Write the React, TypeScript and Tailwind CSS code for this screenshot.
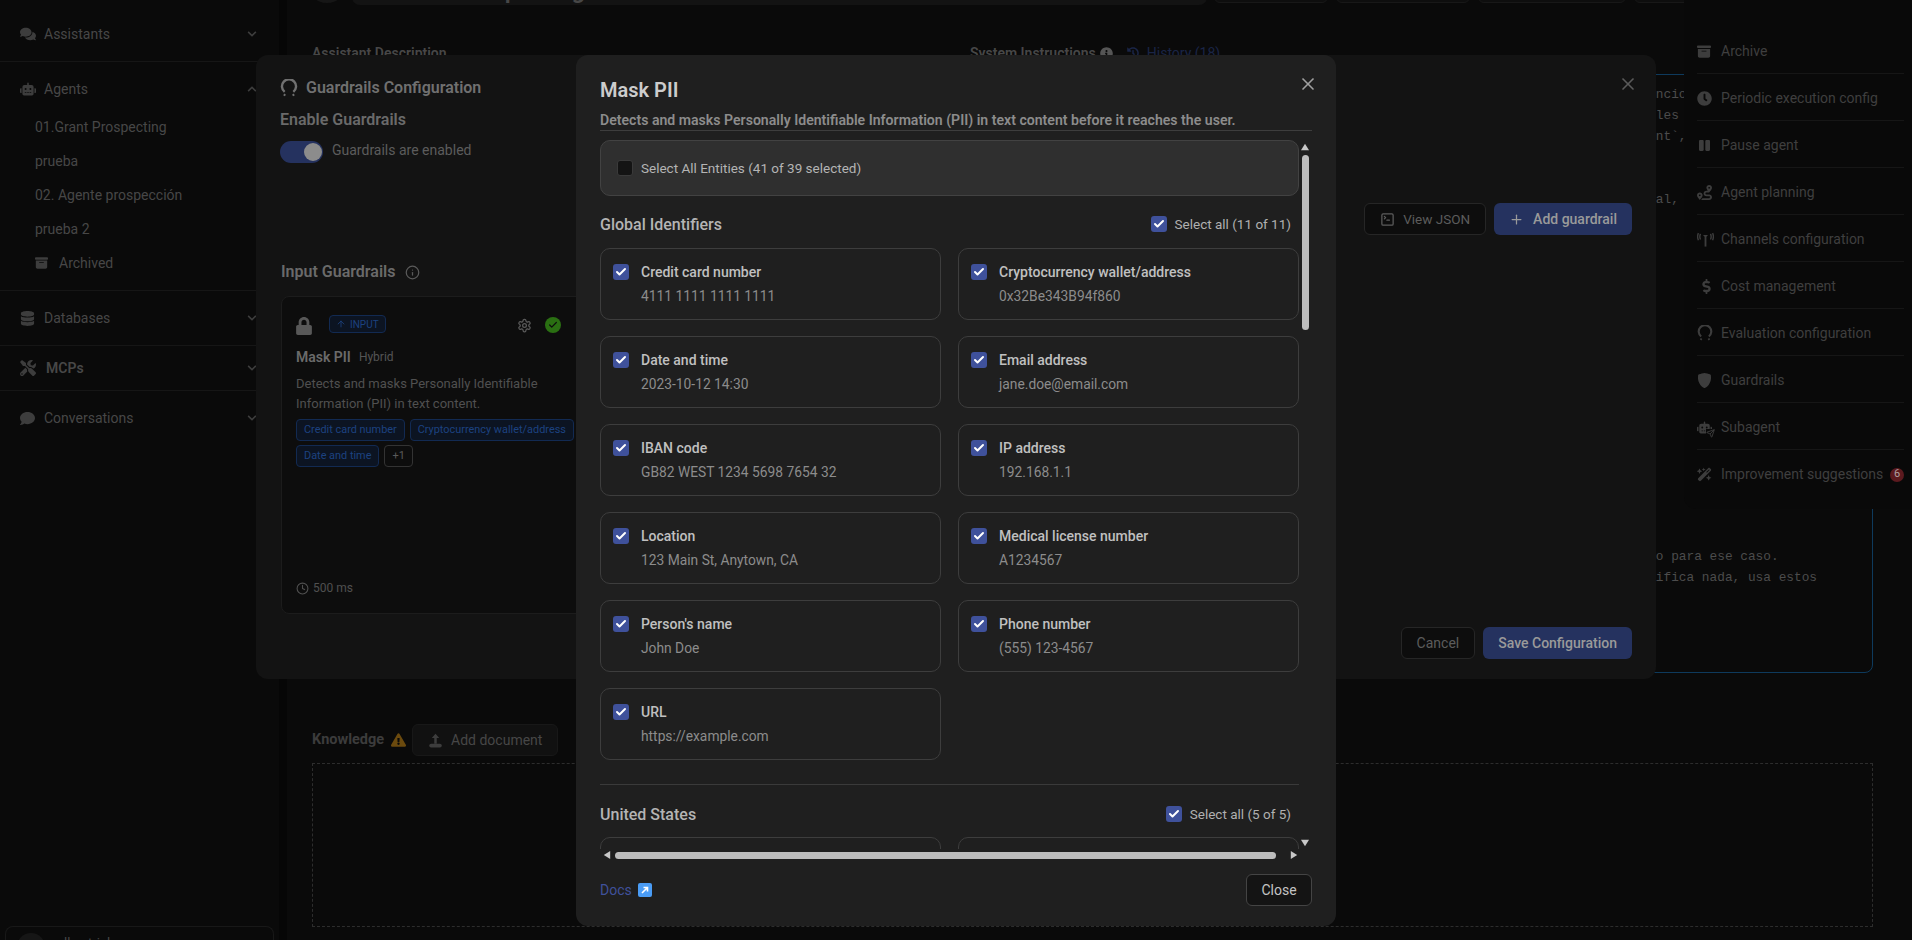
import { ReactNode } from "react";
import {
  FaChevronDown,
  FaChevronUp,
  FaClock,
  FaComment,
  FaComments,
  FaDatabase,
  FaDollarSign,
  FaExclamationTriangle,
  FaHistory,
  FaInfoCircle,
  FaLock,
  FaPause,
  FaRobot,
  FaRoute,
  FaTools,
} from "react-icons/fa";
import { BsShieldFill } from "react-icons/bs";
import { FaBoxArchive, FaWandMagicSparkles } from "react-icons/fa6";
import { LuCheck, LuClock, LuInfo, LuPlus, LuSend, LuSettings, LuSquareTerminal, LuX, LuArrowUp } from "react-icons/lu";

// horseshoe-looking icon used for evaluation + guardrails config
function ArcIcon({ className }: { className?: string }) {
  return (
    <svg viewBox="0 0 24 24" fill="none" stroke="currentColor" className={className}>
      <path d="M6.2 17.2A9.4 9.4 0 1 1 17.8 17.2" strokeWidth={3.2} />
      <path d="M5 20.5l2.2 1.6M19 20.5l-2.2 1.6" strokeWidth={2.6} />
    </svg>
  );
}

function AntennaIcon({ className }: { className?: string }) {
  return (
    <svg viewBox="0 0 24 24" fill="none" stroke="currentColor" strokeWidth={2} className={className}>
      <path d="M12 8v14" strokeWidth={2.6} />
      <path d="M8.5 5.5h7l-3.5 4z" fill="currentColor" stroke="none" />
      <path d="M5 4c-1 2-1 6 0 8M2 3c-1.4 3-1.4 7 0 10M19 4c1 2 1 6 0 8M22 3c1.4 3 1.4 7 0 10" />
    </svg>
  );
}

function UploadIcon({ className }: { className?: string }) {
  return (
    <svg viewBox="0 0 24 24" fill="currentColor" className={className}>
      <path d="M12 1l6 7h-4v9h-4V8H6z" />
      <rect x="2" y="17" width="20" height="6" rx="3" />
    </svg>
  );
}

function Tri({ d, className }: { d: string; className: string }) {
  return (
    <svg viewBox="0 0 10 10" fill="#c8c8c8" className={className}>
      <polygon points={d} />
    </svg>
  );
}

interface SideSectionProps {
  icon: ReactNode;
  label: string;
  open?: boolean;
  className: string;
  labelClass?: string;
  children?: ReactNode;
}

function SideSection({ icon, label, open, className, labelClass, children }: SideSectionProps) {
  return (
    <div className={`border-b border-[#161616] ${className}`}>
      <div className="flex h-6 items-center pl-[20px] pr-[22px]">
        <span className="flex w-[24px] text-[#3d3d3d]">{icon}</span>
        <span className={`flex-1 text-[14px] text-[#474747] ${labelClass ?? ""}`}>{label}</span>
        {open ? (
          <FaChevronUp className="h-[10px] w-[10px] text-[#3d3d3d]" />
        ) : (
          <FaChevronDown className="h-[10px] w-[10px] text-[#3d3d3d]" />
        )}
      </div>
      {children}
    </div>
  );
}

function Sidebar() {
  const agents = ["01.Grant Prospecting", "prueba", "02. Agente prospección", "prueba 2"];
  return (
    <div className="flex h-full w-[279px] shrink-0 flex-col">
      <SideSection icon={<FaComments size={16} />} label="Assistants" className="pb-[15px] pt-[22px]" />
      <SideSection icon={<FaRobot size={16} />} label="Agents" open className="pb-[10px] pt-[15px]">
        <div className="mt-[9px]">
          {agents.map((a) => (
            <div key={a} className="flex h-[34px] items-center pl-[35px] text-[14px] text-[#474747]">
              {a}
            </div>
          ))}
          <div className="flex h-[34px] items-center pl-[35px] text-[14px] text-[#474747]">
            <FaBoxArchive className="mr-[11px] h-[14px] w-[13px] text-[#3d3d3d]" />
            Archived
          </div>
        </div>
      </SideSection>
      <SideSection icon={<FaDatabase size={15} />} label="Databases" className="pb-[15px] pt-[15px]" />
      <SideSection
        icon={<FaTools size={16} />}
        label="MCPs"
        labelClass="font-semibold ml-[2px]"
        className="pb-[10px] pt-[10px]"
      />
      <SideSection icon={<FaComment size={15} />} label="Conversations" className="border-b-0 pt-[15px]" />
      <div className="mx-[5px] mt-auto flex h-[14px] gap-3 overflow-hidden rounded-t-lg border border-b-0 border-[#181818] pl-[11px] pt-[6px]">
        <div className="h-[28px] w-[28px] shrink-0 rounded-full bg-[#161616]" />
        <span className="text-[13px] leading-5 text-[#474747]">allan.trials</span>
      </div>
    </div>
  );
}

function line(hidden: string, visible: string) {
  return hidden.padEnd(88) + visible;
}

const promptLines = [
  line("Eres un agente de prospección de subvenciones y ayudas públicas para organiza", "ncio"),
  line("Tu objetivo es encontrar oportunidades de financiación que sean", "les"),
  line("Usa siempre la herramienta `search_grant", "nt`,"),
  "",
  "",
  line("Busca primero en el ámbito nacion", "al,"),
];
const promptEnd = [
  line("Si el usuario indica un país, busca únicamente en el listad", "o para ese caso."),
  line("Si no especif", "ifica nada, usa estos"),
];

function MainColumn() {
  const topButtons = ["w-[114px]", "w-[134px]", "w-[148px]", "w-[107px]", "w-[86px]", "w-[30px]"];
  return (
    <div className="-mt-[35px] flex h-[975px] flex-1 flex-col pl-[25px] pr-[39px]">
      <div className="flex h-10 items-start">
        <div className="-ml-[5px] mr-[5px] mt-[-2px] h-10 w-10 shrink-0 rounded-full bg-[#161616]" />
        <div className="flex h-10 w-[855px] shrink-0 items-end rounded-lg bg-[#131313] px-[4px] text-[24px] font-semibold leading-[30px] text-[#474747]">
          01.Grant Prospecting
        </div>
        <div className="ml-[7px] flex shrink-0 gap-2">
          {topButtons.map((w) => (
            <div key={w} className={`h-[38px] ${w} rounded-md border border-[#181818] bg-[#0e0e0e]`} />
          ))}
        </div>
      </div>
      <div className="mt-[38px] flex gap-5">
        <div className="w-[638px]">
          <div className="flex h-5 items-center text-[14px] font-semibold text-[#474747]">Assistant Description</div>
          <div className="mt-[11px] h-[599px] rounded-lg border border-[#1c1c1c]" />
        </div>
        <div className="flex-1">
          <div className="flex h-5 items-center gap-1 text-[14px] font-semibold text-[#474747]">
            System Instructions
            <FaInfoCircle size={13} className="text-[#555555]" />
            <FaHistory size={12} className="ml-[10px] text-[#1a2547]" />
            <span className="ml-1 font-normal text-[#1a2547]">History (18)</span>
          </div>
          <div className="mt-[11px] flex h-[599px] flex-col justify-between overflow-hidden rounded-lg border border-[#0e3a5c] pb-[84px] pl-[9px] pt-[9px] text-[12.8px] leading-[21px] text-[#4c4c4c]">
            <pre className="font-['Liberation_Mono',monospace]">{promptLines.join("\n")}</pre>
            <pre className="font-['Liberation_Mono',monospace]">{promptEnd.join("\n")}</pre>
          </div>
        </div>
      </div>
      <div className="mt-[51px] flex h-8 items-center">
        <span className="text-[14.5px] font-bold text-[#3c3c3c]">Knowledge</span>
        <FaExclamationTriangle className="ml-[7px] h-[14px] w-[15px] text-[#6b4a0e]" />
        <div className="ml-[6px] flex h-8 items-center gap-2 rounded-md border border-[#181818] bg-[#111111] px-[15px] text-[14px] text-[#474747]">
          <UploadIcon className="h-[15px] w-[15px] text-[#3d3d3d]" />
          Add document
        </div>
      </div>
      <div className="mt-[7px] h-[164px] border border-dashed border-[#2d2d2d]" />
    </div>
  );
}

function SubagentIcon() {
  return (
    <span className="relative flex">
      <FaRobot size={15} />
      <LuSend size={9} strokeWidth={2.5} className="absolute -bottom-[3px] -right-[3px] bg-[#090909]" />
    </span>
  );
}

function SideMenu() {
  const items: { label: string; icon: ReactNode }[] = [
    { label: "Archive", icon: <FaBoxArchive className="h-[15px] w-[14px]" /> },
    { label: "Periodic execution config", icon: <FaClock size={15} /> },
    { label: "Pause agent", icon: <FaPause className="ml-[2px] h-[13px] w-[11px]" /> },
    { label: "Agent planning", icon: <FaRoute size={15} /> },
    { label: "Channels configuration", icon: <AntennaIcon className="h-[17px] w-[17px]" /> },
    { label: "Cost management", icon: <FaDollarSign className="ml-[2px]" size={15} /> },
    { label: "Evaluation configuration", icon: <ArcIcon className="h-4 w-4" /> },
    { label: "Guardrails", icon: <BsShieldFill size={15} /> },
    { label: "Subagent", icon: <SubagentIcon /> },
    { label: "Improvement suggestions", icon: <FaWandMagicSparkles size={15} /> },
  ];
  return (
    <div className="absolute right-0 top-0 flex h-[509px] w-[228px] flex-col rounded-bl-xl bg-[#090909] pl-[13px] pr-2 pt-[27px]">
      {items.map((item, i) => (
        <div
          key={item.label}
          className={`flex h-[47px] shrink-0 items-center text-[14px] text-[#3f3f3f] ${
            i < items.length - 1 ? "border-b border-[#161616]" : ""
          }`}
        >
          <span className="flex w-6 shrink-0 translate-y-px text-[#3d3d3d]">{item.icon}</span>
          <span className="flex-1 translate-y-px whitespace-nowrap">{item.label}</span>
          {i === items.length - 1 && (
            <span className="flex h-[14px] w-[14px] translate-y-px items-center justify-center rounded-full bg-[#5c1a1f] text-[11px] text-[#b0a0a0]">
              6
            </span>
          )}
        </div>
      ))}
    </div>
  );
}

function Chip({ children }: { children: ReactNode }) {
  return (
    <span className="flex h-[22px] items-center rounded border border-[#122a52] bg-[#0c1422] px-[7px] text-[10.9px] text-[#1c4280]">
      {children}
    </span>
  );
}

function GuardrailCard() {
  return (
    <div className="ml-px mt-3 flex h-[318px] w-[320px] flex-col rounded-lg border border-[#1c1c1c] bg-[#0d0d0d] pb-[17px] pl-[14px] pt-[18px]">
      <div className="flex h-5 w-[265px] items-center">
        <FaLock className="h-[18px] w-[16px] translate-y-[1px] text-[#585858]" />
        <span className="ml-[17px] flex h-[18px] -translate-y-[1px] items-center gap-1 rounded border border-[#122a52] bg-[#0c1422] px-[6px] text-[10px] text-[#1c4280]">
          <LuArrowUp size={10} /> INPUT
        </span>
        <LuSettings className="ml-auto h-[15px] w-[15px] text-[#5a5a5a]" />
        <span className="ml-[13px] flex h-4 w-4 items-center justify-center rounded-full bg-[#2a6f12]">
          <LuCheck size={10} strokeWidth={3} className="text-[#0d0d0d]" />
        </span>
      </div>
      <div className="mt-3 flex h-5 items-center gap-2">
        <span className="text-[14px] font-semibold text-[#6a6a6a]">Mask PII</span>
        <span className="text-[12px] text-[#555555]">Hybrid</span>
      </div>
      <p className="mt-[7px] w-[270px] text-[13px] leading-5 text-[#505050]">
        Detects and masks Personally Identifiable Information (PII) in text content.
      </p>
      <div className="mt-[5px] flex flex-wrap gap-x-[5px] gap-y-1">
        <Chip>Credit card number</Chip>
        <Chip>Cryptocurrency wallet/address</Chip>
        <Chip>Date and time</Chip>
        <span className="flex h-[22px] items-center rounded border border-[#333333] px-[7px] text-[11px] text-[#5a5a5a]">
          +1
        </span>
      </div>
      <div className="mt-auto flex h-4 items-center gap-1 text-[12px] text-[#505050]">
        <LuClock size={13} />
        500 ms
      </div>
    </div>
  );
}

function GuardrailsDialog() {
  return (
    <div className="absolute left-[256px] top-[55px] flex h-[624px] w-[1400px] flex-col rounded-xl bg-[#131313] pl-6 pr-6 pt-[21px]">
      <div className="flex h-6 items-center gap-2 text-[16px] font-semibold text-[#707070]">
        <ArcIcon className="h-[18px] w-[18px]" />
        Guardrails Configuration
        <LuX className="-mr-[6px] -mt-[9px] ml-auto h-5 w-5 text-[#5a5a5a]" />
      </div>
      <div className="mt-2 flex h-6 items-center text-[16px] font-semibold text-[#6a6a6a]">Enable Guardrails</div>
      <div className="mt-[9px] flex h-[22px] items-center gap-[9px] text-[14px] text-[#5c5c5c]">
        <div className="flex h-[22px] w-[43px] items-center justify-end rounded-full bg-[#25325f] pr-px">
          <div className="h-[18px] w-[18px] rounded-full bg-[#8c8c8c]" />
        </div>
        <span className="-translate-y-[2px]">Guardrails are enabled</span>
      </div>
      <div className="mt-[40px] flex justify-end gap-2">
        <div className="flex h-8 items-center gap-2 rounded-md border border-[#262626] bg-[#0d0d0d] px-[15px] text-[13.5px] text-[#5c5c5c]">
          <LuSquareTerminal size={15} />
          View JSON
        </div>
        <div className="flex h-8 items-center gap-[9px] rounded-md bg-[#25325f] px-[15px] text-[14px] font-medium text-[#9a9a9a]">
          <LuPlus size={15} />
          Add guardrail
        </div>
      </div>
      <div className="ml-px mt-[25px] flex h-6 items-center gap-[9px] text-[16px] font-semibold text-[#6a6a6a]">
        Input Guardrails
        <LuInfo size={15} className="text-[#5a5a5a]" />
      </div>
      <GuardrailCard />
      <div className="mt-[13px] flex justify-end gap-2">
        <div className="flex h-8 items-center rounded-md border border-[#262626] bg-[#0d0d0d] px-[15px] text-[14px] text-[#5c5c5c]">
          Cancel
        </div>
        <div className="flex h-8 items-center rounded-md bg-[#25325f] px-[15px] text-[14px] font-medium text-[#9a9a9a]">
          Save Configuration
        </div>
      </div>
    </div>
  );
}

function Box({ checked = true }: { checked?: boolean }) {
  if (!checked) {
    return <span className="h-4 w-4 shrink-0 rounded-[3px] border border-[#3a3a3a] bg-[#141414]" />;
  }
  return (
    <span className="flex h-4 w-4 shrink-0 items-center justify-center rounded-[3px] bg-[#3f519b]">
      <LuCheck size={12} strokeWidth={4} className="text-white" />
    </span>
  );
}

function EntityCard({ label, sample }: { label: string; sample?: string }) {
  return (
    <div className="flex h-[72px] gap-3 rounded-[10px] border border-[#3d3d3d] pl-3 pt-[13px]">
      <span className="mt-[2px]">
        <Box />
      </span>
      <div className="leading-5">
        <div className="text-[14px] font-medium text-[#c0c0c0]">{label}</div>
        <div className="mt-1 text-[13.8px] text-[#8c8c8c]">{sample}</div>
      </div>
    </div>
  );
}

function GroupHeader({ title, count }: { title: string; count: string }) {
  return (
    <div className="flex h-6 items-center justify-between pr-2">
      <span className="translate-y-px text-[16px] font-medium text-[#b4b4b4]">{title}</span>
      <span className="flex items-center gap-2 text-[13.5px] text-[#b0b0b0]">
        <Box />
        {count}
      </span>
    </div>
  );
}

const globalEntities = [
  ["Credit card number", "4111 1111 1111 1111"],
  ["Cryptocurrency wallet/address", "0x32Be343B94f860"],
  ["Date and time", "2023-10-12 14:30"],
  ["Email address", "jane.doe@email.com"],
  ["IBAN code", "GB82 WEST 1234 5698 7654 32"],
  ["IP address", "192.168.1.1"],
  ["Location", "123 Main St, Anytown, CA"],
  ["Medical license number", "A1234567"],
  ["Person's name", "John Doe"],
  ["Phone number", "(555) 123-4567"],
  ["URL", "https://example.com"],
];

function MaskPiiDialog() {
  return (
    <div className="absolute left-[576px] top-[55px] flex h-[871px] w-[760px] flex-col rounded-xl bg-[#1f1f1f] px-6 pt-[21px]">
      <div className="flex h-7 items-center justify-between">
        <h2 className="text-[20px] font-semibold text-[#cccccc]">Mask PII</h2>
        <LuX className="-mt-3 mr-[-6px] h-5 w-5 text-[#a0a0a0]" />
      </div>
      <div className="mt-[6px] border-b border-[#3d3d3d] text-[14.1px] font-semibold leading-5 text-[#8c8c8c]">
        Detects and masks Personally Identifiable Information (PII) in text content before it reaches the user.
      </div>
      <div className="relative mt-[9px] h-[720px]">
        <div className="h-[709px] w-[699px] overflow-hidden">
          <div className="flex h-14 items-center gap-2 rounded-[10px] border border-[#424242] bg-[#2f2f2f] pl-4 text-[13.5px] text-[#b4b4b4]">
            <Box checked={false} />
            Select All Entities (41 of 39 selected)
          </div>
          <div className="mt-4">
            <GroupHeader title="Global Identifiers" count="Select all (11 of 11)" />
          </div>
          <div className="mt-3 grid grid-cols-2 gap-x-[17px] gap-y-4">
            {globalEntities.map(([label, sample]) => (
              <EntityCard key={label} label={label} sample={sample} />
            ))}
          </div>
          <div className="mt-6 border-t border-[#3a3a3a] pt-[17px]">
            <GroupHeader title="United States" count="Select all (5 of 5)" />
          </div>
          <div className="mt-[11px] grid grid-cols-2 gap-x-[17px] gap-y-4">
            <EntityCard label="" />
            <EntityCard label="" />
          </div>
        </div>
        {/* fake scrollbars, native ones render differently here */}
        <Tri d="5,1 10,9 0,9" className="absolute left-[701px] top-[3px] h-2 w-2" />
        <div className="absolute left-[702px] top-[15px] h-[175px] w-[7px] rounded-full bg-[#bdbdbd]" />
        <Tri d="0,1 10,1 5,9" className="absolute left-[701px] top-[699px] h-2 w-2" />
        <Tri d="9,0 9,10 1,5" className="absolute left-[3px] top-[711px] h-2 w-2" />
        <div className="absolute left-[15px] top-[712px] h-[7px] w-[661px] rounded-full bg-[#bdbdbd]" />
        <Tri d="1,0 1,10 9,5" className="absolute left-[690px] top-[711px] h-2 w-2" />
      </div>
      <div className="mt-[14px] flex h-8 items-center justify-between">
        <span className="flex items-center gap-[6px] text-[14px] text-[#3f519b]">
          Docs
          <span className="flex h-[14px] w-[14px] items-center justify-center rounded-[2px] bg-[#4a9cf5]">
            <svg viewBox="0 0 10 10" className="h-[10px] w-[10px]" fill="none" stroke="white" strokeWidth={1.6}>
              <path d="M2 8l5-5M3.5 2.5H7.5V6.5" />
            </svg>
          </span>
        </span>
        <span className="flex h-8 w-[66px] items-center justify-center rounded-md border border-[#444444] bg-[#141414] text-[14px] text-[#c4c4c4]">
          Close
        </span>
      </div>
    </div>
  );
}

export default function App() {
  return (
    <div className="relative flex h-[940px] w-[1912px] overflow-hidden bg-[#0a0a0a] font-['Roboto',sans-serif]">
      <Sidebar />
      <div className="h-full w-2 shrink-0 bg-[#060606]" />
      <MainColumn />
      <div className="absolute right-[4px] top-0 h-4 w-[7px] bg-[#181818]" />
      <SideMenu />
      <GuardrailsDialog />
      <MaskPiiDialog />
    </div>
  );
}
